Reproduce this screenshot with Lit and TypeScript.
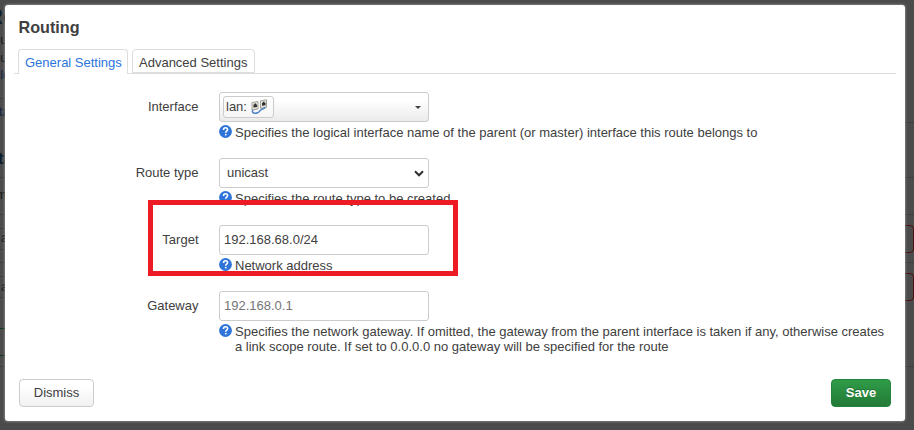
import { LitElement, html, css, nothing } from "lit";
import { customElement, property } from "lit/decorators.js";

@customElement("help-text")
class HelpText extends LitElement {
  static styles = css`
    :host { display: flex; gap: 3px; line-height: 15px; }
    .mark { flex: none; width: 13px; height: 13px; }
    .txt { white-space: pre-line; }
  `;
  @property() text = "";
  render() {
    return html`<svg class="mark" viewBox="0 0 13 13">
        <circle cx="6.5" cy="6.5" r="6.4" fill="#2f74d9" />
        <path d="M4.5 4.900c0-2.900 4.100-2.800 4.100-.3 0 1.400-1.900 1.500-1.900 3.100" fill="none" stroke="#fff" stroke-width="1.600" />
        <rect x="5.900" y="8.900" width="1.700" height="1.500" fill="#fff" />
      </svg><span class="txt">${this.text}</span>`;
  }
}

@customElement("form-row")
class FormRow extends LitElement {
  static styles = css`
    :host { display: flex; }
    .label { width: 193.5px; text-align: right; line-height: 29px; margin-right: 20.5px; flex: none; }
    .field { display: flex; flex-direction: column; gap: 3px; }
  `;
  @property() label = "";
  @property() help = "";
  render() {
    return html`<div class="label">${this.label}</div>
      <div class="field"><slot></slot>${this.help ? html`<help-text .text=${this.help}></help-text>` : nothing}</div>`;
  }
}

@customElement("app-root")
class AppRoot extends LitElement {
  static styles = css`
    :host {
      display: block; position: relative; width: 914px; height: 430px; overflow: hidden;
      background: #4b4b4b; color: #404040; font: 13px "Liberation Sans", Arial, sans-serif;
    }
    * { box-sizing: border-box; }
    .page { position: absolute; inset: 0; overflow: hidden; }
    .frag { position: absolute; line-height: 16px; color: #171717; white-space: nowrap; }
    .frag.link { color: #0e2341; }
    .frag.head { font-size: 22px; font-weight: bold; color: #0e1d2c; }
    .frag.sub { font-size: 17px; font-weight: bold; color: #0e1d2c; }
    .rule { position: absolute; height: 1px; background: #3e3e3e; }
    .rule.left { left: 0; width: 20px; }
    .rule.right { right: 0; width: 20px; }
    .rule.green { background: #0d3a1c; }
    .remove { position: absolute; left: 880px; width: 34px; height: 28px; border: 1px solid #4a120a; border-radius: 4px; }
    .modal {
      position: absolute; left: 5px; top: 5px; width: 900px; height: 416px; background: #fff;
      border-radius: 3px; box-shadow: 0 0 3px #aaa; display: flex; flex-direction: column;
    }
    .title { margin: 12px 0 0 13.5px; font-size: 16.2px; line-height: 20px; font-weight: bold; }
    .tabs { display: flex; gap: 4px; margin: 12px 9px 0; padding-left: 4px; border-bottom: 1px solid #ddd; height: 25px; flex: none; }
    .tab { width: 123px; height: 24px; border: 1px solid #ddd; border-radius: 4px 4px 0 0; line-height: 25px; padding: 0 6px; white-space: nowrap; }
    .tab.on { width: 110px; height: 25px; margin-bottom: -1px; position: relative; z-index: 1; border-bottom: 0; color: #2b75db; background: #fff; }
    .form { display: grid; grid-template-rows: 66px 67px 66px 66px; margin-top: 18px; }
    .box {
      width: 210px; height: 30px; border: 1px solid #ccc; border-radius: 3px; background: #fff;
      display: flex; align-items: center; padding: 0 4px; line-height: 18px;
    }
    .box.select { padding: 0 4px 0 7px; justify-content: space-between; }
    .box.drop { background: linear-gradient(#fff, #fff 25%, #ebebeb); padding: 0 7px 0 3px; justify-content: space-between; }
    .box.hint { color: #757575; }
    .chip { display: flex; align-items: center; gap: 4px; width: 51px; height: 22px; padding-left: 2px; border: 1px solid #ccc; border-radius: 3px; background: linear-gradient(#fff, #f5f5f5); }
    .caret { border: 3px solid transparent; border-top-color: #404040; border-bottom: 0; }
    .foot { display: flex; justify-content: space-between; margin: auto 14px 14px; }
    .btn {
      width: 75px; height: 28px; padding: 0; border: 1px solid #ccc; border-radius: 4px; font: inherit; color: #404040;
      background: linear-gradient(#fff, #fff 25%, #f1f1f1); line-height: 26px;
    }
    .btn.save { width: 60px; color: #fff; font-weight: bold; border-color: #24853a; background: linear-gradient(#2f9c48, #237a36); text-shadow: 0 -1px 0 rgba(0,0,0,.25); }
    .outline { position: absolute; left: 148px; top: 200px; width: 310px; height: 76px; border: 5px solid #ed1c24; }
  `;

  render() {
    return html`
      <div class="page">
        <span class="frag head" style="left:-13px;top:9px">Ro</span>
        <span class="frag" style="left:-7px;top:32px">ou</span>
        <span class="frag" style="left:-7px;top:50px">ou</span>
        <span class="frag link" style="left:-7px;top:67px">ule</span>
        <span class="frag link" style="left:-1px;top:104px">ta</span>
        <span class="frag sub" style="left:-2px;top:151px">ta</span>
        <span class="frag" style="left:-4px;top:187px">m</span>
        <span class="frag" style="left:1px;top:230px">a</span>
        <span class="frag" style="left:1px;top:279px">a</span>
        ${[98, 177, 214, 228, 249, 262, 276, 297, 366].map((y) => html`<i class="rule left" style="top:${y}px"></i>`)}
        ${[328, 355].map((y) => html`<i class="rule left green" style="top:${y}px"></i>`)}
        ${[122, 177, 214, 262, 366].map((y) => html`<i class="rule right" style="top:${y}px"></i>`)}
        ${[225, 273].map((y) => html`<i class="remove" style="top:${y}px"></i>`)}
      </div>
      <div class="modal">
        <div class="title">Routing</div>
        <div class="tabs"><div class="tab on">General Settings</div><div class="tab">Advanced Settings</div></div>
        <div class="form">
          <form-row label="Interface" help="Specifies the logical interface name of the parent (or master) interface this route belongs to">
            <div class="box drop">
              <div class="chip"><span>lan:</span>
                <svg width="17" height="16" viewBox="0 0 17 16">
                  <path d="M1 3.500l6-1v7.500l-6 1zM9.500 1.800l6-1v7.500l-6 1z" fill="#e4e3db" stroke="#99988f" stroke-width=".9" />
                  <path d="M2.500 5.500h1v-1H5v1h1v2.500l-3.500.5zM11 3.800h1v-1h1.500v1h1v2.500l-3.500.5z" fill="#303030" />
                  <path d="M2 11c-2 3 2 4 4.500 2.800 3-1.300 2.500-3.300 5-3.800 2-.4 2.500-1 2-2" fill="none" stroke="#4c82c3" stroke-width="1.500" />
                </svg>
              </div>
              <span class="caret"></span>
            </div>
          </form-row>
          <form-row label="Route type" help="Specifies the route type to be created">
            <div class="box select"><span>unicast</span>
              <svg width="10" height="7" viewBox="0 0 10 7"><path d="M1 1.300l4 4 4-4" fill="none" stroke="#303030" stroke-width="2" /></svg>
            </div>
          </form-row>
          <form-row label="Target" help="Network address"><div class="box">192.168.68.0/24</div></form-row>
          <form-row label="Gateway" help=${"Specifies the network gateway. If omitted, the gateway from the parent interface is taken if any, otherwise creates\na link scope route. If set to 0.0.0.0 no gateway will be specified for the route"}>
            <div class="box hint">192.168.0.1</div>
          </form-row>
        </div>
        <div class="foot"><button class="btn">Dismiss</button><button class="btn save">Save</button></div>
      </div>
      <div class="outline"></div>
    `;
  }
}
